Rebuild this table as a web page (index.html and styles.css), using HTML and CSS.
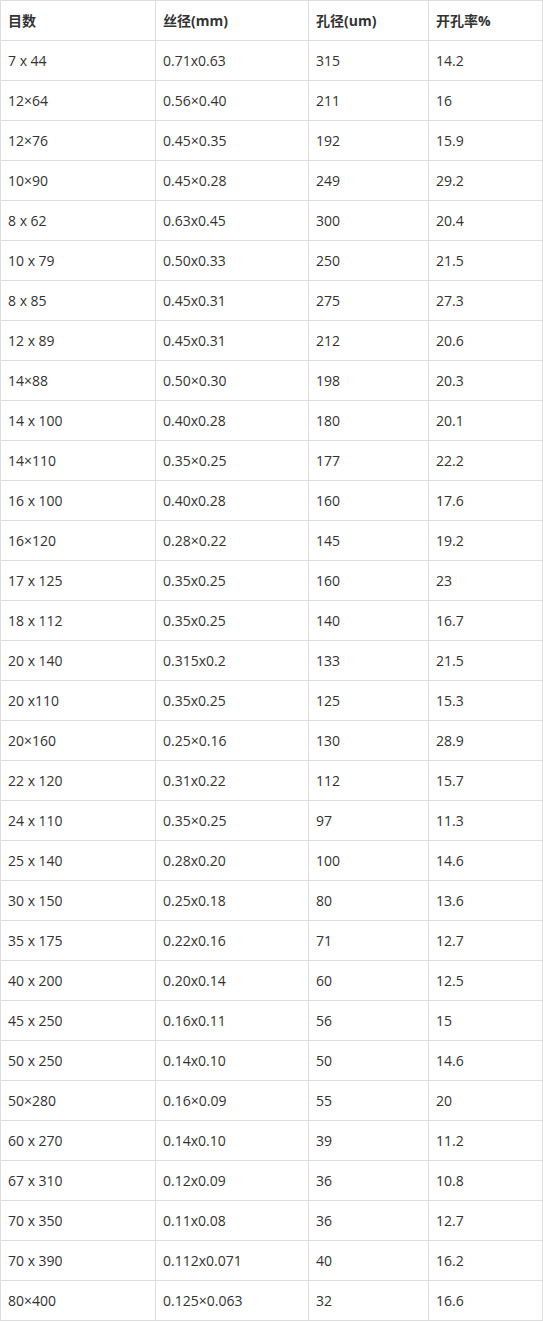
FILE: index.html
```html
<!DOCTYPE html>
<html lang="zh">
<head>
<meta charset="utf-8">
<link rel="stylesheet" href="styles.css">
</head>
<body>
<table class="spec">
<colgroup><col class="c1"><col class="c2"><col class="c3"><col class="c4"></colgroup>
<thead>
<tr><th>目数</th><th>丝径(mm)</th><th>孔径(um)</th><th>开孔率%</th></tr>
</thead>
<tbody>
<tr><td>7 x 44</td><td>0.71x0.63</td><td>315</td><td>14.2</td></tr>
<tr><td>12×64</td><td>0.56×0.40</td><td>211</td><td>16</td></tr>
<tr><td>12×76</td><td>0.45×0.35</td><td>192</td><td>15.9</td></tr>
<tr><td>10×90</td><td>0.45×0.28</td><td>249</td><td>29.2</td></tr>
<tr><td>8 x 62</td><td>0.63x0.45</td><td>300</td><td>20.4</td></tr>
<tr><td>10 x 79</td><td>0.50x0.33</td><td>250</td><td>21.5</td></tr>
<tr><td>8 x 85</td><td>0.45x0.31</td><td>275</td><td>27.3</td></tr>
<tr><td>12 x 89</td><td>0.45x0.31</td><td>212</td><td>20.6</td></tr>
<tr><td>14×88</td><td>0.50×0.30</td><td>198</td><td>20.3</td></tr>
<tr><td>14 x 100</td><td>0.40x0.28</td><td>180</td><td>20.1</td></tr>
<tr><td>14×110</td><td>0.35×0.25</td><td>177</td><td>22.2</td></tr>
<tr><td>16 x 100</td><td>0.40x0.28</td><td>160</td><td>17.6</td></tr>
<tr><td>16×120</td><td>0.28×0.22</td><td>145</td><td>19.2</td></tr>
<tr><td>17 x 125</td><td>0.35x0.25</td><td>160</td><td>23</td></tr>
<tr><td>18 x 112</td><td>0.35x0.25</td><td>140</td><td>16.7</td></tr>
<tr><td>20 x 140</td><td>0.315x0.2</td><td>133</td><td>21.5</td></tr>
<tr><td>20 x110</td><td>0.35x0.25</td><td>125</td><td>15.3</td></tr>
<tr><td>20×160</td><td>0.25×0.16</td><td>130</td><td>28.9</td></tr>
<tr><td>22 x 120</td><td>0.31x0.22</td><td>112</td><td>15.7</td></tr>
<tr><td>24 x 110</td><td>0.35×0.25</td><td>97</td><td>11.3</td></tr>
<tr><td>25 x 140</td><td>0.28x0.20</td><td>100</td><td>14.6</td></tr>
<tr><td>30 x 150</td><td>0.25x0.18</td><td>80</td><td>13.6</td></tr>
<tr><td>35 x 175</td><td>0.22x0.16</td><td>71</td><td>12.7</td></tr>
<tr><td>40 x 200</td><td>0.20x0.14</td><td>60</td><td>12.5</td></tr>
<tr><td>45 x 250</td><td>0.16x0.11</td><td>56</td><td>15</td></tr>
<tr><td>50 x 250</td><td>0.14x0.10</td><td>50</td><td>14.6</td></tr>
<tr><td>50×280</td><td>0.16×0.09</td><td>55</td><td>20</td></tr>
<tr><td>60 x 270</td><td>0.14x0.10</td><td>39</td><td>11.2</td></tr>
<tr><td>67 x 310</td><td>0.12x0.09</td><td>36</td><td>10.8</td></tr>
<tr><td>70 x 350</td><td>0.11x0.08</td><td>36</td><td>12.7</td></tr>
<tr><td>70 x 390</td><td>0.112x0.071</td><td>40</td><td>16.2</td></tr>
<tr><td>80×400</td><td>0.125×0.063</td><td>32</td><td>16.6</td></tr>
</tbody>
</table>
</body>
</html>
```

FILE: styles.css
```css
html, body {
  margin: 0;
  padding: 0;
  background: #fff;
}
body {
  font-family: "Open Sans", "Noto Sans CJK SC", sans-serif;
  font-size: 14px;
  color: #333;
}
.spec {
  width: 543px;
  border-collapse: collapse;
  table-layout: fixed;
}
.c1 { width: 155px; }
.c2 { width: 153px; }
.c3 { width: 120px; }
.c4 { width: auto; }
.spec th,
.spec td {
  border: 1px solid #ddd;
  height: 40px;
  padding: 0 7px;
  text-align: left;
  vertical-align: middle;
  box-sizing: border-box;
  line-height: 20px;
}
.spec th {
  font-weight: bold;
}
.spec td {
  font-weight: 400;
}
```
